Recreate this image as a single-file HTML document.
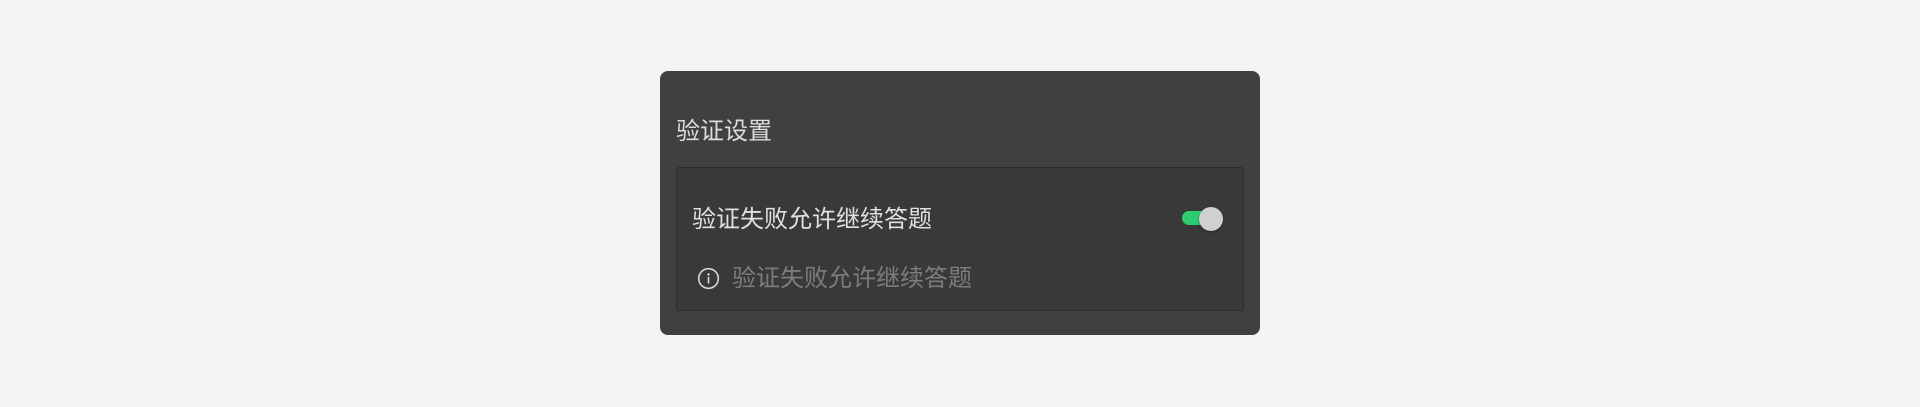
<!DOCTYPE html>
<html><head><meta charset="utf-8"><style>
html,body{margin:0;padding:0;width:1920px;height:407px;background:#f4f4f4;overflow:hidden;font-family:"Liberation Sans","Noto Sans CJK SC",sans-serif;}
.panel{position:absolute;left:660px;top:71px;width:600px;height:264px;background:#404040;border-radius:8px;}
.title{position:absolute;left:676px;top:117px;font-size:24px;line-height:30px;color:#dcdcdc;}
.box{position:absolute;left:676px;top:167px;width:566px;height:142px;background:#393939;border:1px solid #2c2c2c;border-radius:3px;}
.label{position:absolute;left:692px;top:205px;font-size:24px;line-height:30px;color:#e0e0e0;}
.track{position:absolute;left:1182px;top:211px;width:26px;height:14px;border-radius:7px;background:#2ecc71;}
.knob{position:absolute;left:1199px;top:207px;width:24px;height:24px;border-radius:50%;background:#d0d0d0;box-shadow:0 1px 2px rgba(0,0,0,.4);}
.hint{position:absolute;left:732px;top:264px;font-size:24px;line-height:30px;color:#7c7c7c;}
svg{position:absolute;left:697px;top:267px;}
</style></head><body>
<div class="panel"></div>
<div class="title">验证设置</div>
<div class="box"></div>
<div class="label">验证失败允许继续答题</div>
<div class="track"></div><div class="knob"></div>
<svg width="23" height="23" viewBox="0 0 23 23"><circle cx="11.5" cy="11.5" r="9.8" fill="none" stroke="#d8d8d8" stroke-width="1.6"/><circle cx="11.5" cy="7.5" r="1.2" fill="#d8d8d8"/><rect x="10.7" y="10" width="1.6" height="6.5" fill="#d8d8d8"/></svg>
<div class="hint">验证失败允许继续答题</div>
</body></html>
